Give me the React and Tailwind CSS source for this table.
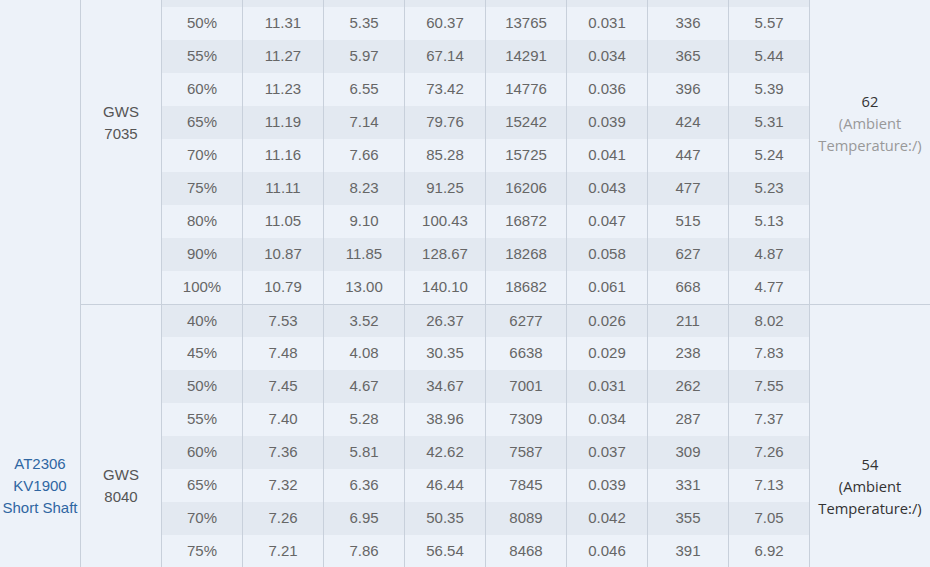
const groups = [
  {
    prop: ["GWS", "7035"],
    temp: "62",
    muted: true,
    rows: [
      ["40%", "11.38", "4.02", "45.75", "12120", "0.026", "270", "5.90"],
      ["45%", "11.35", "4.70", "53.35", "12990", "0.029", "305", "5.72"],
      ["50%", "11.31", "5.35", "60.37", "13765", "0.031", "336", "5.57"],
      ["55%", "11.27", "5.97", "67.14", "14291", "0.034", "365", "5.44"],
      ["60%", "11.23", "6.55", "73.42", "14776", "0.036", "396", "5.39"],
      ["65%", "11.19", "7.14", "79.76", "15242", "0.039", "424", "5.31"],
      ["70%", "11.16", "7.66", "85.28", "15725", "0.041", "447", "5.24"],
      ["75%", "11.11", "8.23", "91.25", "16206", "0.043", "477", "5.23"],
      ["80%", "11.05", "9.10", "100.43", "16872", "0.047", "515", "5.13"],
      ["90%", "10.87", "11.85", "128.67", "18268", "0.058", "627", "4.87"],
      ["100%", "10.79", "13.00", "140.10", "18682", "0.061", "668", "4.77"],
    ],
  },
  {
    prop: ["GWS", "8040"],
    temp: "54",
    muted: false,
    rows: [
      ["40%", "7.53", "3.52", "26.37", "6277", "0.026", "211", "8.02"],
      ["45%", "7.48", "4.08", "30.35", "6638", "0.029", "238", "7.83"],
      ["50%", "7.45", "4.67", "34.67", "7001", "0.031", "262", "7.55"],
      ["55%", "7.40", "5.28", "38.96", "7309", "0.034", "287", "7.37"],
      ["60%", "7.36", "5.81", "42.62", "7587", "0.037", "309", "7.26"],
      ["65%", "7.32", "6.36", "46.44", "7845", "0.039", "331", "7.13"],
      ["70%", "7.26", "6.95", "50.35", "8089", "0.042", "355", "7.05"],
      ["75%", "7.21", "7.86", "56.54", "8468", "0.046", "391", "6.92"],
      ["80%", "7.15", "8.60", "61.40", "8790", "0.050", "420", "6.84"],
      ["90%", "7.02", "10.45", "73.36", "9470", "0.058", "486", "6.62"],
      ["100%", "6.91", "12.10", "83.61", "9980", "0.066", "540", "6.46"],
    ],
  },
  {
    prop: ["GWS", "9047"],
    temp: "49",
    muted: false,
    rows: [
      ["40%", "7.50", "4.21", "31.58", "5620", "0.031", "240", "7.60"],
      ["45%", "7.46", "4.88", "36.40", "5950", "0.035", "268", "7.36"],
      ["50%", "7.42", "5.60", "41.55", "6280", "0.038", "296", "7.12"],
      ["55%", "7.37", "6.30", "46.43", "6570", "0.041", "322", "6.94"],
      ["60%", "7.33", "6.95", "50.94", "6830", "0.044", "345", "6.77"],
      ["65%", "7.28", "7.62", "55.47", "7080", "0.047", "368", "6.63"],
      ["70%", "7.23", "8.30", "60.01", "7310", "0.050", "390", "6.50"],
      ["75%", "7.18", "9.20", "66.06", "7620", "0.054", "419", "6.34"],
      ["80%", "7.12", "10.05", "71.56", "7900", "0.058", "445", "6.22"],
      ["90%", "6.98", "12.30", "85.85", "8540", "0.067", "505", "5.88"],
      ["100%", "6.86", "14.10", "96.73", "8920", "0.074", "548", "5.67"],
    ],
  },
];

export default function App() {
  let idx = 0;
  return (
    <div className="h-[567px] overflow-hidden bg-[#edf2f9] font-['Liberation_Sans',Arial,sans-serif] text-[15px]">
      <div className="-mt-[59px] flex">
        <div className="w-[81px] shrink-0 border-r border-[#c8d0db] flex items-center justify-center text-center leading-[22px] text-[#2f66a2]">
          <div>AT2306<br />KV1900<br />Short Shaft</div>
        </div>
        <div className="flex flex-col">
          {groups.map((g, gi) => (
            <div key={gi} className={gi > 0 ? "flex border-t border-[#c8d0db]" : "flex"}>
              <div className="w-[81px] shrink-0 border-r border-[#c8d0db] flex items-center justify-center text-center leading-[22px] text-[#555]">
                <div>{g.prop[0]}<br />{g.prop[1]}</div>
              </div>
              <div className="flex flex-col">
                {g.rows.map((r, ri) => {
                  const dark = idx++ % 2 === 1;
                  const h = gi > 0 && ri === 0 ? "h-[32px]" : "h-[33px]";
                  return (
                    <div key={ri} className={`flex ${h} ${dark ? "bg-[#e3e9f1]" : "bg-[#edf2f9]"}`}>
                      {r.map((c, ci) => (
                        <div key={ci} className="w-[81px] shrink-0 border-r border-[#c8d0db] flex items-center justify-center text-[#666]">
                          {c}
                        </div>
                      ))}
                    </div>
                  );
                })}
              </div>
              <div className="w-[120px] shrink-0 flex items-center justify-center text-center leading-[22px] font-['Open_Sans',sans-serif] text-[14.7px] text-[#333]">
                <div>
                  {g.temp}
                  <br />
                  <span className={g.muted ? "text-[#999]" : "text-[#333]"}>
                    (Ambient
                    <br />
                    Temperature:/)
                  </span>
                </div>
              </div>
            </div>
          ))}
        </div>
      </div>
    </div>
  );
}
